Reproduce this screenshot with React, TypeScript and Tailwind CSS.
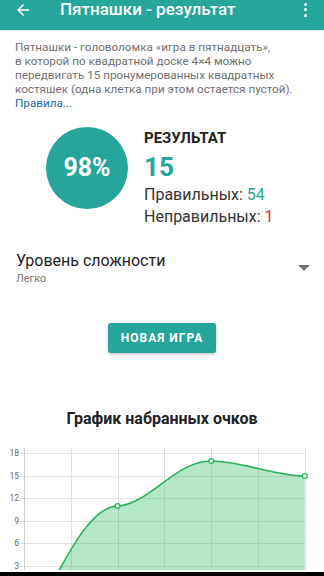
import React from 'react';

const TEAL = '#26a69a';

const yOf = (v: number) => 455 + (18 - v) * 7.533;

const ScoreChart: React.FC = () => {
  const gridX = [24, 70.8, 117.6, 164.4, 211.2, 258, 304.8];
  const ticks = [18, 15, 12, 9, 6, 3];
  const line =
    'M45,600 C72,545 95,508 117.6,508 C150,506 175,463 211.2,463 C242,463 274,478 304.8,478';
  const area = line + ' L304.8,600 L45,600 Z';

  return (
    <svg width="324" height="140" viewBox="0 432 324 140" className="block">
      {gridX.map((x) => (
        <line key={x} x1={Math.round(x) + 0.5} x2={Math.round(x) + 0.5} y1={450} y2={600} stroke="#e0e0e0" strokeWidth="1" />
      ))}
      {ticks.map((t) => (
        <g key={t}>
          <line x1={20} x2={305} y1={Math.round(yOf(t)) + 0.5} y2={Math.round(yOf(t)) + 0.5} stroke="#e0e0e0" strokeWidth="1" />
          <text x={19} y={yOf(t) + 3} textAnchor="end" fontSize="8.5" fill="#666" fontFamily="Roboto, sans-serif">
            {t}
          </text>
        </g>
      ))}
      <line x1={24.5} x2={24.5} y1={450} y2={600} stroke="#cfcfcf" strokeWidth="1" />
      <path d={area} fill="rgba(46,186,96,0.35)" />
      <path d={line} fill="none" stroke="#26b05a" strokeWidth="1.6" />
      {[
        [117.6, 508],
        [211.2, 463],
        [304.8, 478],
      ].map(([x, y]) => (
        <circle key={x} cx={x} cy={y} r="2.4" fill="#fff" stroke="#26b05a" strokeWidth="1.2" />
      ))}
    </svg>
  );
};

const App: React.FC = () => {
  return (
    <div className="w-[324px] h-[576px] overflow-hidden bg-white flex flex-col font-['Roboto',sans-serif]">
      {/* toolbar, top part cut off */}
      <div className="h-[30px] shrink-0 bg-[#26a69a] flex items-start">
        <div className="h-[19px] w-full flex items-center">
          <svg width="18" height="18" viewBox="0 0 24 24" className="ml-[14px] shrink-0" fill="#fff">
            <path d="M20 11H7.83l5.59-5.59L12 4l-8 8 8 8 1.41-1.41L7.83 13H20v-2z" />
          </svg>
          <span className="ml-[28px] text-[17px] leading-[19px] font-medium text-white whitespace-nowrap">
            Пятнашки - результат
          </span>
          <div className="ml-auto mr-[17px] flex flex-col items-center gap-[2.5px]">
            <span className="w-[3px] h-[3px] rounded-full bg-white" />
            <span className="w-[3px] h-[3px] rounded-full bg-white" />
            <span className="w-[3px] h-[3px] rounded-full bg-white" />
          </div>
        </div>
      </div>

      <p className="pt-[10px] px-[15px] text-[11.7px] leading-[14px] text-[#707070] whitespace-nowrap">
        Пятнашки - головоломка «игра в пятнадцать»,
        <br />
        в которой по квадратной доске 4×4 можно
        <br />
        передвигать 15 пронумерованных квадратных
        <br />
        костяшек (одна клетка при этом остается пустой).
        <br />
        <span className="text-[#1e63b5]">Правила...</span>
      </p>

      <div className="mt-[17px] pl-[46px] flex items-start">
        <div className="w-[82px] h-[82px] rounded-full bg-[#26a69a] flex items-center justify-center shrink-0">
          <span className="text-white text-[25px] font-bold">98%</span>
        </div>
        <div className="ml-[16px] mt-[2px] flex flex-col">
          <span className="text-[15px] leading-[18px] font-bold text-[#222]">РЕЗУЛЬТАТ</span>
          <span className="mt-[5px] text-[26px] leading-[30px] font-bold" style={{ color: TEAL }}>
            15
          </span>
          <span className="mt-[2px] text-[16px] leading-[22px] text-[#333]">
            Правильных: <span className="text-[#26a69a]">54</span>
          </span>
          <span className="text-[16px] leading-[22px] text-[#333]">
            Неправильных: <span className="text-[#ee2a22]">1</span>
          </span>
        </div>
      </div>

      <div className="mt-[23px] pl-[16px] pr-[14px] flex items-center justify-between">
        <div className="flex flex-col">
          <span className="text-[16px] leading-[20px] text-[#212121]">Уровень сложности</span>
          <span className="mt-[1px] text-[11px] leading-[13px] text-[#777]">Легко</span>
        </div>
        <div className="w-0 h-0 border-l-[6px] border-r-[6px] border-t-[6px] border-l-transparent border-r-transparent border-t-[#707070]" />
      </div>

      <div className="mt-[38px] flex justify-center">
        <button className="w-[108px] h-[30px] rounded-[3px] bg-[#26a69a] text-white text-[12px] font-bold tracking-[1px] shadow-[0_1px_3px_rgba(0,0,0,0.3)]">
          НОВАЯ ИГРА
        </button>
      </div>

      <h2 className="mt-[55px] text-center text-[16px] leading-[22px] font-bold text-[#222]">
        График набранных очков
      </h2>

      <div className="flex-1 overflow-hidden">
        <ScoreChart />
      </div>
      <div className="h-[4px] shrink-0 bg-black" />
    </div>
  );
};

export default App;
